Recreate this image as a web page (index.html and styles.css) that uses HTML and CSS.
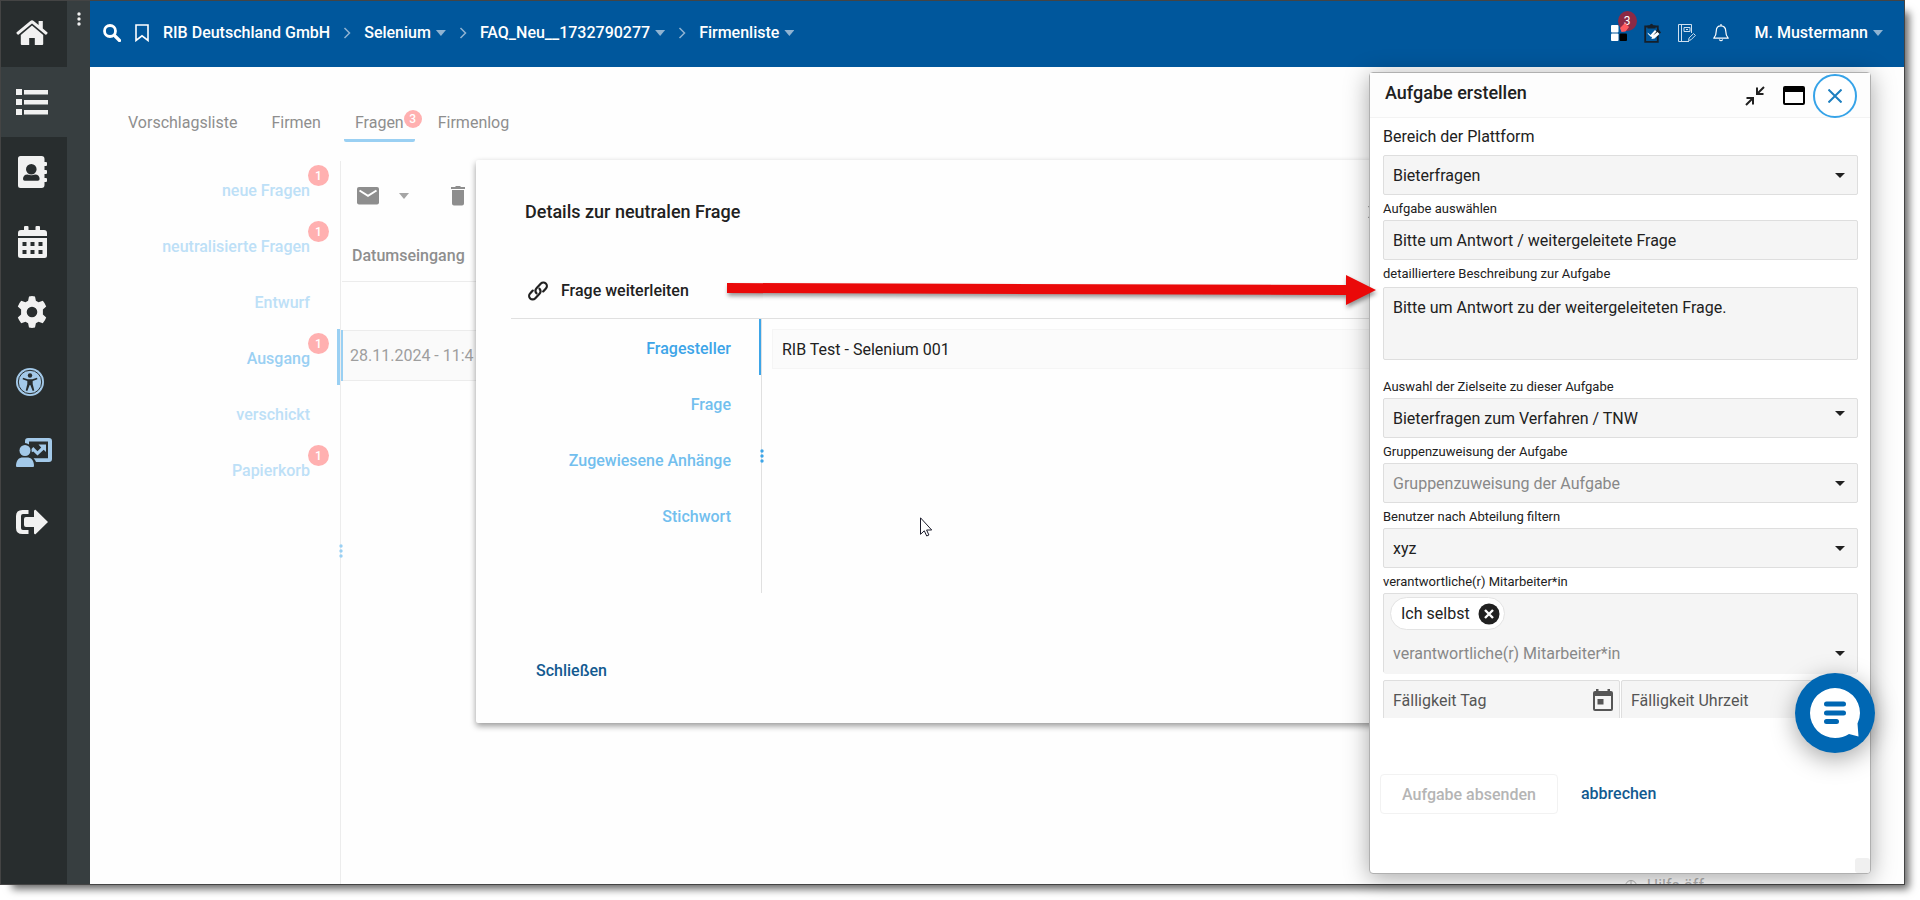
FILE: index.html
```html
<!DOCTYPE html>
<html lang="de">
<head>
<meta charset="utf-8">
<title>Firmenliste – Fragen</title>
<link rel="stylesheet" href="styles.css">
</head>
<body>
<div class="app">
  <nav class="rail" aria-label="Hauptnavigation">
    <a class="rail-item rail-home" href="#" aria-label="Startseite"><svg width="32" height="28" viewBox="0 0 32 28"><path d="M16 6.500 4.800 16v9a1 1 0 0 0 1 1h7.400v-7h5.600v7h7.400a1 1 0 0 0 1-1v-9z"/><path d="M31.300 13.300 26.800 9.500V2h-4.200v4L17.700 1.900a2.600 2.600 0 0 0-3.400 0L.7 13.300a.8.800 0 0 0-.1 1.100l1 1.200c.3.300.8.300 1.100 0L16 4.600l13.300 11c.3.300.8.300 1.100 0l1-1.200a.8.800 0 0 0-.1-1.100z"/></svg></a>
    <a class="rail-item is-active" href="#" aria-label="Liste"><svg width="32" height="28" viewBox="0 0 32 28"><path d="M0 1h6v6H0zM8 2h24v4.500H8zM0 11h6v6H0zM8 12h24v4.500H8zM0 21h6v6H0zM8 22h24v4.500H8z"/></svg></a>
    <a class="rail-item" href="#" aria-label="Kontakte"><svg width="32" height="32" viewBox="0 0 32 32"><path fill-rule="evenodd" d="M4.500 0h21A3 3 0 0 1 28.500 3v3h1.500q1 0 1 1v2q0 1-1 1h-1.500v4h1.500q1 0 1 1v2q0 1-1 1h-1.500v4h1.500q1 0 1 1v2q0 1-1 1h-1.500v3a3 3 0 0 1-3 3h-21A2.500 2.500 0 0 1 2 29.500v-27A2.500 2.500 0 0 1 4.500 0zM15.300 8a5.300 5.300 0 1 0 0 10.600 5.300 5.300 0 0 0 0-10.600zM11.500 18.500C8.500 18.500 7 20.500 7 23q0 1.700 1.700 1.700h13.200q1.700 0 1.700-1.700c0-2.500-1.500-4.500-4.500-4.500-2.300 1-5.200 1-7.600 0z"/></svg></a>
    <a class="rail-item" href="#" aria-label="Kalender"><svg width="32" height="32" viewBox="0 0 32 32"><path fill-rule="evenodd" d="M8 1q0-1 1-1h2.500q1 0 1 1v3h7V1q0-1 1-1H23q1 0 1 1v3h4a3 3 0 0 1 3 3v3H2V7a3 3 0 0 1 3-3h3zM2 12h29v17.500a2.500 2.500 0 0 1-2.500 2.500h-24A2.500 2.500 0 0 1 2 29.500zm4.500 4v4h4v-4zm8 0v4h4v-4zm8 0v4h4v-4zm-16 8v4h4v-4zm8 0v4h4v-4zm8 0v4h4v-4z"/></svg></a>
    <a class="rail-item" href="#" aria-label="Einstellungen"><svg width="32" height="32" viewBox="0 0 32 32"><path fill-rule="evenodd" d="M13 .4q3-.6 6 0l.9 4.400 2.600 1.500 4.300-1.500q2.200 2.400 3.400 5.700l-3.300 3v5l3.300 3q-1 3-3.400 5.700l-4.300-1.500-2.600 1.500-.9 4.400q-3 .6-6 0l-.9-4.400-2.600-1.500-4.300 1.500Q3 24.500 1.800 21.500l3.300-3v-5l-3.300-3Q3 7.200 5.200 4.800l4.300 1.500 2.600-1.500zM16 10.700a5.300 5.300 0 1 0 0 10.600 5.300 5.300 0 0 0 0-10.600z"/></svg></a>
    <a class="rail-item is-blue" href="#" aria-label="Barrierefreiheit"><svg class="icon-access" width="28" height="28" viewBox="0 0 28 28"><circle cx="14" cy="14" r="14"/><circle class="ink-line" cx="14" cy="14" r="11.700"/><circle class="ink" cx="14" cy="7.500" r="2.200"/><path class="ink" d="m7 9.800 4.700 1.500h4.600L21 9.800l.4 1.500-4.700 1.800v3l1.600 6.300-1.600.5L14.300 17h-.6l-2.400 5.900-1.600-.5 1.600-6.300v-3l-4.700-1.800z"/></svg></a>
    <a class="rail-item is-blue" href="#" aria-label="Schulung"><svg class="icon-train" width="36" height="30" viewBox="0 0 36 30"><circle cx="9" cy="13.500" r="5.500"/><path d="M0 29c0-6 3-8.500 7-8.500h4c4 0 7 2.500 7 8.500q0 1-1 1H1q-1 0-1-1z"/><path d="M9 6V4a3 3 0 0 1 3-3h21a3 3 0 0 1 3 3v18a3 3 0 0 1-3 3H20c-.5-1.500-1.300-2.700-2.500-3.700H32V4.500H13V7.500Q11 6 9 6z"/><path d="M22.500 7.500H30V15l-2.300-2.300-6.200 5.700-4.200-4-1.500.8-.3-3.200L17.300 10l4.200 4.200 3.700-3.700z"/></svg></a>
    <a class="rail-item" href="#" aria-label="Abmelden"><svg width="32" height="26" viewBox="0 0 32 26"><path d="M12.500 1v4H7Q5 5 5 7v12q0 2 2 2h5.500v4H6.500Q0 25 0 19V7Q0 1 6.500 1z"/><path d="M19.500.7 32 13 19.500 25.300q-1.500.3-1.500-1.500V18H10q-2 0-2-2v-6q0-2 2-2h8V2.200Q18 .4 19.500.7z"/></svg></a>
  </nav>
  <div class="rail-edge"><svg width="4" height="14" viewBox="0 0 4 14"><circle cx="2" cy="2" r="1.700"/><circle cx="2" cy="7" r="1.700"/><circle cx="2" cy="12" r="1.700"/></svg></div>

  <div class="main">
    <header class="topbar">
      <button class="icon-btn" aria-label="Suchen"><svg width="18" height="18" viewBox="0 0 18 18" fill="none" stroke="#fff"><circle cx="7" cy="7" r="5.500" stroke-width="2.800"/><path d="m11.500 11.500 5 5" stroke-width="3.200" stroke-linecap="round"/></svg></button>
      <button class="icon-btn icon-mark" aria-label="Merken"><svg width="14" height="18" viewBox="0 0 14 18" fill="none" stroke="#fff" stroke-width="1.600"><path d="M1 1h12v15.500l-6-4.700-6 4.700z"/></svg></button>
      <a class="crumb" href="#">RIB Deutschland GmbH</a>
      <svg class="chev" width="8" height="12" viewBox="0 0 8 12"><path d="m1.500 1 5 5-5 5"/></svg>
      <a class="crumb" href="#">Selenium<i class="tri"></i></a>
      <svg class="chev" width="8" height="12" viewBox="0 0 8 12"><path d="m1.500 1 5 5-5 5"/></svg>
      <a class="crumb" href="#">FAQ_Neu__1732790277<i class="tri"></i></a>
      <svg class="chev" width="8" height="12" viewBox="0 0 8 12"><path d="m1.500 1 5 5-5 5"/></svg>
      <a class="crumb" href="#">Firmenliste<i class="tri"></i></a>
      <div class="tools">
        <button class="icon-btn apps" aria-label="Apps"><svg width="16" height="16" viewBox="0 0 16 16"><rect width="7.500" height="7.500" rx="1" fill="#fff"/><rect y="8.500" width="7.500" height="7.500" rx="1" fill="#fff"/><rect x="8.500" y="8.500" width="7.500" height="7.500" rx="1" fill="#000"/></svg><span class="badge-top">3</span><svg class="apps-dot" width="9" height="9" viewBox="0 0 9 9"><path d="m5 0 4 4-3.500 4.500L1.500 9 0 5z" fill="#ff5a5f"/></svg></button>
        <button class="icon-btn" aria-label="Aufgaben"><svg width="17" height="20" viewBox="0 0 17 20"><path d="M1.200 3.500h12.600v15.300H1.200z" fill="none" stroke="#15202b" stroke-width="1.800"/><path d="M3.500 5.500V2.500H5.500Q7.500-1 9.500 2.500h2v3z" fill="#15202b"/><path d="m14 5.500 3 4-5 5-3-3z" fill="#15202b"/><path d="m3.500 9.500 3 2.500L11 7l1.500 1.500-3.500 4 4.500-3.500 2 2-5 4.500-3 .5.500-2.200-1 .2-3-3z" fill="#fff"/></svg></button>
        <button class="icon-btn" aria-label="Notizbuch"><svg width="18" height="18" viewBox="0 0 18 18" fill="none" stroke="#cfe0ef"><path d="M11 17.500H.5V.5h13V9M3.500.5v17M6 3.500h6v4H6zM8 5.500h2"/><path d="m10.500 16.500.6-2.600 4.500-4.300 1.800 1.800-4.400 4.400z"/></svg></button>
        <button class="icon-btn" aria-label="Benachrichtigungen"><svg width="16" height="18" viewBox="0 0 16 18" fill="none" stroke="#fff" stroke-width="1.200" stroke-linejoin="round"><path d="M8 1.800c3 0 4.700 2.200 4.700 5 0 4 .8 5.500 2.500 7.400H.8c1.700-1.900 2.500-3.400 2.500-7.400 0-2.800 1.700-5 4.700-5zM8 0v2M6.300 15.500q1.700 2.500 3.400 0"/></svg></button>
        <a class="crumb user" href="#">M. Mustermann<i class="tri"></i></a>
      </div>
    </header>

    <div class="content">
      <div class="tabs" role="tablist">
        <a class="tab" href="#">Vorschlagsliste</a>
        <a class="tab" href="#">Firmen</a>
        <a class="tab is-current" href="#">Fragen<span class="badge-tab">3</span></a>
        <a class="tab" href="#">Firmenlog</a>
      </div>
      <div class="split">
        <nav class="side" aria-label="Fragen">
          <a class="side-item" href="#">neue Fragen<span class="badge">1</span></a>
          <a class="side-item" href="#">neutralisierte Fragen<span class="badge">1</span></a>
          <a class="side-item" href="#">Entwurf</a>
          <a class="side-item is-current" href="#">Ausgang<span class="badge">1</span></a>
          <a class="side-item" href="#">verschickt</a>
          <a class="side-item" href="#">Papierkorb<span class="badge">1</span></a>
          <svg class="grip" width="4" height="14" viewBox="0 0 4 14"><circle cx="2" cy="2" r="1.700"/><circle cx="2" cy="7" r="1.700"/><circle cx="2" cy="12" r="1.700"/></svg>
        </nav>
        <section class="list">
          <div class="list-tools">
            <button class="icon-btn" aria-label="Nachricht"><svg width="22" height="18" viewBox="0 0 22 18"><rect width="22" height="17.500" rx="2" fill="#8e8e8e"/><path d="m2.500 3.500 8.500 5.300 8.500-5.300" fill="none" stroke="#fff" stroke-width="2"/></svg></button>
            <i class="tri tri-gray"></i>
            <button class="icon-btn trash" aria-label="Löschen"><svg width="14" height="20" viewBox="0 0 14 20" fill="#8e8e8e"><path d="M0 1h4l1-1h4l1 1h4v2H0zM1 4h12v13.500a2 2 0 0 1-2 2H3a2 2 0 0 1-2-2z"/></svg></button>
          </div>
          <table class="grid">
            <thead><tr><th>Datumseingang</th></tr></thead>
            <tbody><tr class="gap"><td></td></tr><tr class="row"><td>28.11.2024 - 11:4</td></tr></tbody>
          </table>
        </section>
      </div>
      <p class="help"><svg width="12" height="12" viewBox="0 0 12 12" fill="none" stroke="#b5b5b5"><circle cx="6" cy="6" r="5.500"/><path d="M6 0v12"/></svg>Hilfe öff</p>

      <section class="dialog" role="dialog" aria-labelledby="dlg-title">
        <div class="dialog-head">
          <h2 class="dialog-title" id="dlg-title">Details zur neutralen Frage</h2>
          <button class="icon-btn" aria-label="Dialog schließen"><svg width="14" height="14" viewBox="0 0 14 14" stroke="#333" stroke-width="2"><path d="m1 1 12 12M13 1 1 13"/></svg></button>
        </div>
        <button class="forward"><svg width="20" height="20" viewBox="0 0 20 20" fill="none" stroke="#212121" stroke-width="2.200" stroke-linecap="round"><path d="M8.500 12.300a4 4 0 0 1 .2-5.300l4.200-4.400a3.400 3.400 0 0 1 5 4.800l-2.700 3"/><path d="M11.500 7.700a4 4 0 0 1-.2 5.300l-4.200 4.400a3.400 3.400 0 0 1-5-4.800l2.700-3"/></svg>Frage weiterleiten</button>
        <div class="dialog-body">
          <nav class="dialog-nav" aria-label="Details">
            <a class="dnav is-current" href="#">Fragesteller</a>
            <a class="dnav" href="#">Frage</a>
            <a class="dnav" href="#">Zugewiesene Anhänge</a>
            <a class="dnav" href="#">Stichwort</a>
            <svg class="grip grip-strong" width="4" height="14" viewBox="0 0 4 14"><circle cx="2" cy="2" r="1.700"/><circle cx="2" cy="7" r="1.700"/><circle cx="2" cy="12" r="1.700"/></svg>
          </nav>
          <div class="dialog-pane"><input class="asker" type="text" aria-label="Fragesteller" value="RIB Test - Selenium 001" readonly></div>
        </div>
        <button class="link-btn dialog-close">Schließen</button>
      </section>
    </div>
  </div>

  <section class="panel" role="dialog" aria-labelledby="panel-title">
    <div class="panel-head">
      <h2 class="panel-title" id="panel-title">Aufgabe erstellen</h2>
      <button class="icon-btn" aria-label="Verkleinern"><svg width="20" height="20" viewBox="0 0 20 20" fill="none" stroke="#212121" stroke-width="2"><path d="m1 19 6.500-6.500M1.500 12H8v6.500M19 1l-6.500 6.500M12 1.500V8h6.500"/></svg></button>
      <button class="icon-btn btn-max" aria-label="Maximieren"><svg width="22" height="19" viewBox="0 0 22 19"><path d="M2 0h18a2 2 0 0 1 2 2v15a2 2 0 0 1-2 2H2a2 2 0 0 1-2-2V2a2 2 0 0 1 2-2zM2 6v11h18V6z" fill-rule="evenodd"/></svg></button>
      <button class="round-close" aria-label="Schließen"><svg width="14" height="14" viewBox="0 0 14 14" stroke="#1c7fc0" stroke-width="2"><path d="m.5.5 13 13M13.500.5l-13 13"/></svg></button>
    </div>
    <div class="form-scroll">
      <form class="form" id="task">
        <label class="label label-big" for="f1">Bereich der Plattform</label>
        <div class="select"><select id="f1"><option>Bieterfragen</option></select></div>
        <label class="label" for="f2">Aufgabe auswählen</label>
        <input class="field" id="f2" type="text" value="Bitte um Antwort / weitergeleitete Frage">
        <label class="label" for="f3">detailliertere Beschreibung zur Aufgabe</label>
        <textarea class="field area" id="f3">Bitte um Antwort zu der weitergeleiteten Frage.</textarea>
        <label class="label" for="f4">Auswahl der Zielseite zu dieser Aufgabe</label>
        <div class="select select-high"><select id="f4"><option>Bieterfragen zum Verfahren / TNW</option></select></div>
        <label class="label" for="f5">Gruppenzuweisung der Aufgabe</label>
        <div class="select is-empty"><select id="f5"><option>Gruppenzuweisung der Aufgabe</option></select></div>
        <label class="label" for="f6">Benutzer nach Abteilung filtern</label>
        <div class="select"><select id="f6"><option>xyz</option></select></div>
        <label class="label" for="f7">verantwortliche(r) Mitarbeiter*in</label>
        <div class="people">
          <span class="chip">Ich selbst<button type="button" class="icon-btn" aria-label="Entfernen"><svg width="22" height="22" viewBox="0 0 22 22"><circle cx="11" cy="11" r="10.500" fill="#212121"/><path d="m7 7 8 8M15 7l-8 8" stroke="#fff" stroke-width="2.400"/></svg></button></span>
          <div class="select is-empty"><select id="f7"><option>verantwortliche(r) Mitarbeiter*in</option></select></div>
        </div>
        <div class="due">
          <div class="due-day"><input class="field" type="text" placeholder="Fälligkeit Tag" aria-label="Fälligkeit Tag"><svg width="20" height="22" viewBox="0 0 20 22" fill="#555"><path fill-rule="evenodd" d="M3 2V0h2.500v2h9V0H17v2h1a2 2 0 0 1 2 2v16a2 2 0 0 1-2 2H2a2 2 0 0 1-2-2V4a2 2 0 0 1 2-2zM2 7v13h16V7zm2.500 3h6v5.500h-6z"/></svg></div>
          <input class="field" type="text" placeholder="Fälligkeit Uhrzeit" aria-label="Fälligkeit Uhrzeit">
        </div>
      </form>
    </div>
    <div class="actions">
      <button class="submit" form="task" disabled>Aufgabe absenden</button>
      <button class="link-btn">abbrechen</button>
    </div>
    <span class="resizer"></span>
  </section>

  <button class="chat" aria-label="Chat"><svg width="80" height="80" viewBox="0 0 80 80"><path d="M40 15a25 25 0 0 1 25 25q0 5.500-2.500 10.500L63.500 63.500 54 61Q48 65 40 65a25 25 0 0 1 0-50z" fill="#fff"/><path d="M31.500 31h17M31.500 40h17M31.500 48.500h10" stroke="#0067b3" stroke-width="5" stroke-linecap="round"/></svg></button>

  <svg class="arrow" width="654" height="36" viewBox="0 0 654 36"><path d="M0 8l619 2V0l30 15-30 15V20L0 18z" fill="#ea0909"/></svg>
  <svg class="cursor" width="13" height="20" viewBox="0 0 13 20"><path d="M.5.800v16.500l3.800-3.500 2.400 5.200 2.200-1-2.300-5h5.100z" fill="#fff" stroke="#1b1b2b"/></svg>
</div>
</body>
</html>
```

FILE: styles.css
```css
* { box-sizing: border-box; }
body {
  margin: 0;
  background: #fff;
  color: #212121;
  font: 16px/20px Roboto, sans-serif;
}
a { color: inherit; text-decoration: none; }
button, input, select, textarea { font: inherit; color: inherit; }
svg { display: block; flex: none; }
h2, p { margin: 0; }
.icon-btn {
  display: flex;
  flex: none;
  padding: 0;
  border: 0;
  background: none;
}
.app {
  position: relative;
  display: flex;
  height: calc(100vh - 15px);
  margin: 0 15px 15px 0;
  border: 1px solid #444;
  background: #fefefe;
  box-shadow: 8px 8px 8px -4px rgba(0, 0, 0, .6);
}

/* icon rail */
.rail { flex: none; width: 66px; background: #282d2e; }
.rail-item {
  display: flex;
  align-items: center;
  height: 70px;
  padding-left: 15px;
  fill: #f1f1f1;
}
.rail-home { height: 66px; padding-bottom: 3px; }
.rail-item.is-active { background: #373e40; }
.rail-item.is-blue { fill: #a3c9e9; }
.ink { fill: #282d2e; }
.ink-line { fill: none; stroke: #282d2e; stroke-width: 1; }
.rail-edge {
  display: flex;
  flex: none;
  justify-content: center;
  width: 23px;
  padding-top: 11px;
  background: #373e40;
  fill: #f1f1f1;
}

/* top bar */
.main { display: flex; flex: 1; flex-direction: column; min-width: 0; }
.topbar {
  display: flex;
  flex: none;
  align-items: center;
  height: 66px;
  padding: 0 21px 2px 13px;
  background: #00579c;
  color: #fff;
}
.icon-mark { margin: 0 14px; }
.crumb { display: flex; align-items: center; font-weight: 500; white-space: nowrap; }
.tri {
  width: 10px;
  height: 6px;
  margin-left: 5px;
  background: #8fb3d2;
  clip-path: polygon(0 0, 100% 0, 50% 100%);
}
.chev { margin: 0 13px; fill: none; stroke: #8fb3d2; stroke-width: 1.500; }
.tools { display: flex; align-items: center; gap: 17px; margin-left: auto; }
.apps { position: relative; }
.badge-top {
  position: absolute;
  top: -14px;
  left: 7px;
  width: 19px;
  height: 20px;
  border-radius: 50%;
  background: #8c2a45;
  font-size: 12px;
}
.apps-dot { position: absolute; top: -2px; left: 9px; }
.user { margin-left: 9px; }

/* page content */
.content {
  position: relative;
  display: flex;
  flex: 1;
  flex-direction: column;
  min-height: 0;
  overflow: hidden;
}
.tabs { display: flex; gap: 12px; padding: 38px 27px 0; color: #8e8e8e; }
.tab { position: relative; height: 37px; padding: 8px 11px 0; }
.tab.is-current { border-bottom: 3px solid #9ad0f3; border-radius: 2px; }
.badge, .badge-tab {
  position: absolute;
  border-radius: 50%;
  background: #ffb0b0;
  color: #fff;
  font-weight: 500;
  text-align: center;
}
.badge-tab { top: 5px; right: -7px; width: 18px; height: 18px; font-size: 12px; line-height: 18px; }
.badge { top: 4px; right: 11px; width: 21px; height: 21px; font-size: 12px; line-height: 22px; }
.split { display: flex; flex: 1; margin-top: 19px; }
.side { position: relative; flex: none; width: 251px; border-right: 1px solid #ececec; color: #bde0f7; }
.side-item {
  position: relative;
  display: flex;
  align-items: center;
  justify-content: flex-end;
  height: 56px;
  padding: 3px 30px 0 0;
  font-weight: 500;
}
.side-item.is-current { padding-right: 27px; border-right: 3px solid #9ad0f3; color: #9ad0f3; }
.side-item.is-current .badge { right: 8px; }
.grip { position: absolute; right: -3px; top: 383px; fill: #9ad0f3; }
.list { flex: 1; min-width: 0; margin-right: 80px; }
.list-tools { display: flex; align-items: center; height: 68px; padding: 2px 0 0 16px; }
.tri-gray { margin: 0 42px 0 20px; background: #a5a5a5; }
.grid { width: 100%; border-collapse: collapse; color: #8e8e8e; }
.grid th { height: 52px; padding: 2px 10px 0; border-bottom: 1px solid #ececec; font-weight: 500; text-align: left; }
.grid .gap td { height: 49px; padding: 0; }
.grid .row td {
  height: 50px;
  padding: 1px 8px 0 7px;
  border: 1px solid #ececec;
  border-left: 2px solid #9ad0f3;
  background: #fafafa;
  color: #9e9e9e;
}
.help {
  position: absolute;
  right: 200px;
  bottom: -12px;
  display: flex;
  align-items: center;
  gap: 10px;
  color: #b5b5b5;
}

/* question dialog */
.dialog {
  position: absolute;
  top: 93px;
  left: 386px;
  right: 460px;
  padding: 42px 0 43px 35px;
  border-radius: 2px;
  background: #fefefe;
  box-shadow: 0 3px 6px rgba(0, 0, 0, .4);
}
.dialog-head { display: flex; align-items: center; justify-content: space-between; padding: 0 62px 0 14px; }
.dialog-title { font-size: 18px; font-weight: 500; line-height: 20px; }
.forward {
  display: flex;
  align-items: center;
  gap: 13px;
  height: 56px;
  margin-top: 40px;
  padding: 1px 0 0 17px;
  border: 0;
  background: none;
  font-weight: 500;
}
.dialog-body { display: flex; border-top: 1px solid #e0e0e0; }
.dialog-nav {
  position: relative;
  flex: none;
  width: 251px;
  height: 274px;
  border-right: 1px solid #e0e0e0;
  color: #72bfee;
}
.dnav {
  display: flex;
  align-items: center;
  justify-content: flex-end;
  height: 56px;
  padding: 3px 30px 0 0;
  font-weight: 500;
}
.dnav.is-current { padding-right: 28px; border-right: 2px solid #3da5e8; color: #3da5e8; }
.grip-strong { top: 130px; fill: #3da5e8; }
.dialog-pane { flex: 1; padding: 10px; }
.asker { display: block; width: 100%; height: 40px; padding: 0 9px; border: 1px solid #f5f5f5; background: #fbfbfb; }
.link-btn { padding: 0; border: 0; background: none; color: #135a90; font-weight: 500; }
.dialog-close { display: block; margin: 68px 0 0 25px; line-height: 20px; }
.dialog { padding-bottom: 42px; }

/* task panel */
.panel {
  position: absolute;
  top: 71px;
  right: 33px;
  bottom: 10px;
  display: flex;
  flex-direction: column;
  width: 502px;
  border: 1px solid #b0b0b0;
  border-radius: 4px;
  background: #fff;
  box-shadow: 0 4px 24px rgba(0, 0, 0, .35);
}
.panel-head {
  display: flex;
  flex: none;
  align-items: center;
  height: 45px;
  padding: 1px 13px 0 15px;
  border-bottom: 1px solid #f3f3f3;
  background: #fdfdfd;
}
.panel-title { flex: 1; padding-bottom: 6px; font-size: 18px; font-weight: 500; line-height: 20px; }
.btn-max { margin: 0 8px 0 18px; }
.round-close {
  display: flex;
  align-items: center;
  justify-content: center;
  width: 44px;
  height: 44px;
  padding: 0;
  border: 2px solid #36a3e8;
  border-radius: 50%;
  background: #fff;
}
.form-scroll { flex: none; height: 600px; overflow: hidden; }
.form { display: flex; flex-direction: column; padding: 9px 12px 0 13px; }
.label { height: 25px; padding-top: 4px; font-size: 13px; line-height: 20px; white-space: nowrap; }
.label-big { height: 28px; padding-top: 0; font-size: 16px; }
.area + .label { margin-top: 13px; }
.field, .select, .people {
  width: 100%;
  height: 40px;
  border: 1px solid #dedede;
  border-radius: 2px;
  background: #f5f5f5;
}
.field { display: block; padding: 0 9px; }
.field::placeholder { color: #555; opacity: 1; }
.area { height: 73px; margin-top: 2px; padding: 10px 9px; resize: none; }
.select { position: relative; }
.select::after {
  content: "";
  position: absolute;
  top: 17px;
  right: 12px;
  width: 10px;
  height: 5px;
  background: #212121;
  clip-path: polygon(0 0, 100% 0, 50% 100%);
  pointer-events: none;
}
.select-high::after { top: 12px; }
.select select {
  width: 100%;
  height: 38px;
  padding: 2px 9px 0;
  border: 0;
  appearance: none;
  background: none;
}
.select.is-empty select { color: #888; }
.people { height: 80px; padding-top: 3px; }
.people .select { height: 40px; border: 0; }
.chip {
  display: flex;
  align-items: center;
  justify-content: space-between;
  width: 115px;
  height: 33px;
  margin: 0 0 4px 6px;
  padding: 0 4px 0 10px;
  border: 1px solid #e3e3e3;
  border-radius: 17px;
  background: #fff;
}
.due { display: grid; grid-template-columns: 1fr 1fr; gap: 1px; margin-top: 7px; }
.due-day { position: relative; }
.due-day svg { position: absolute; top: 9px; right: 7px; }
.actions { display: flex; align-items: center; gap: 23px; margin-top: 56px; padding-left: 10px; }
.submit {
  height: 40px;
  padding: 1px 21px 0;
  border: 1px solid #f2f2f2;
  border-radius: 4px;
  background: #fff;
  color: #b5b5b5;
  font-weight: 500;
}
.resizer { position: absolute; right: 0; bottom: 0; width: 15px; height: 15px; border-radius: 3px; background: #f0f0f0; }
.chat {
  position: absolute;
  right: 29px;
  bottom: 131px;
  width: 80px;
  height: 80px;
  padding: 0;
  border: 0;
  border-radius: 50%;
  background: #0067b3;
  box-shadow: 0 6px 24px rgba(0, 0, 0, .35);
}
.arrow { position: absolute; top: 274px; left: 726px; filter: drop-shadow(1px 3px 2px rgba(0, 0, 0, .4)); }
.cursor { position: absolute; top: 516px; left: 919px; }
```
